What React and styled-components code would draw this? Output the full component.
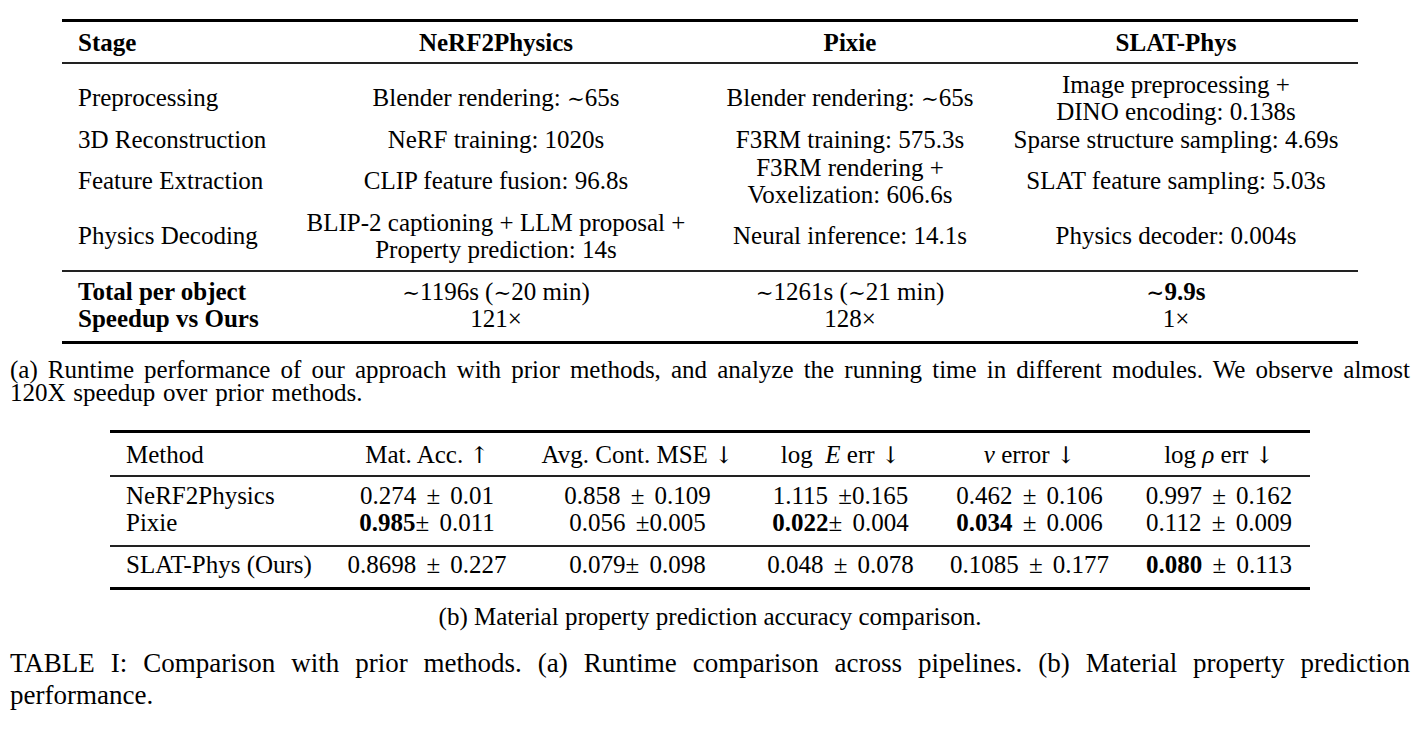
import React from "react";
import styled, { createGlobalStyle } from "styled-components";

const Global = createGlobalStyle`
  html, body { margin: 0; padding: 0; background: #fff; }
  body { font-family: "Liberation Serif", "DejaVu Serif", serif; color: #000; }
`;

const Page = styled.div`
  width: 1404px;
  padding: 19px 8px 0 8px;
  display: flex;
  flex-direction: column;
  font-size: 25px;
`;

const Table = styled.div`
  width: ${(p) => p.$w}px;
  margin: ${(p) => p.$mt || 0}px auto 0 auto;
  border-top: 3px solid #000;
  border-bottom: 3px solid #000;
`;

const Section = styled.div`
  padding: ${(p) => p.$pt}px 0 ${(p) => p.$pb}px 0;
  border-top: ${(p) => (p.$rule ? "2px solid #222" : "none")};
`;

const HeaderRow = styled.div`
  display: grid;
  grid-template-columns: ${(p) => p.$cols};
  height: ${(p) => p.$h}px;
  align-items: center;
  line-height: 27px;
  font-weight: ${(p) => (p.$bold ? 700 : 400)};
`;

const Row = styled.div`
  display: grid;
  grid-template-columns: ${(p) => p.$cols};
  line-height: 27px;
  height: ${(p) => p.$h}px;
`;

const Cell = styled.div`
  padding: 0 16px;
  display: flex;
  flex-direction: column;
  justify-content: center;
  align-items: ${(p) => (p.$left ? "flex-start" : "center")};
  text-align: ${(p) => (p.$left ? "left" : "center")};
  white-space: nowrap;
  font-weight: ${(p) => (p.$bold ? 700 : "inherit")};
  word-spacing: ${(p) => p.$ws || 0}px;
`;

const B = styled.b`
  font-weight: 700;
`;

const M = styled.i`
  font-style: italic;
`;

const Arrow = styled.span`
  font-family: "DejaVu Serif", serif;
  font-variant-emoji: text;
  font-size: 0.92em;
  line-height: 0;
`;

const Sim = styled.span`
  font-size: 0.85em;
  line-height: 0;
`;

const Caption = styled.p`
  margin: ${(p) => p.$mt}px 0 0 0;
  font-size: ${(p) => p.$fs || 25}px;
  line-height: ${(p) => p.$lh}px;
  word-spacing: ${(p) => p.$ws || 0}px;
  text-align: ${(p) => p.$align || "justify"};
  text-align-last: ${(p) => (p.$align === "center" ? "center" : "left")};
  padding: 0 2px;
`;

const colsA = "224px 420px 288px 364px";
const colsB = "219px 196px 225px 181px 197px 182px";

const S = () => <Sim>∼</Sim>;

const runtimeRows = [
  ["Preprocessing", [<>Blender rendering: <S />65s</>], [<>Blender rendering: <S />65s</>], ["Image preprocessing +", "DINO encoding: 0.138s"]],
  ["3D Reconstruction", ["NeRF training: 1020s"], ["F3RM training: 575.3s"], ["Sparse structure sampling: 4.69s"]],
  ["Feature Extraction", ["CLIP feature fusion: 96.8s"], ["F3RM rendering +", "Voxelization: 606.6s"], ["SLAT feature sampling: 5.03s"]],
  ["Physics Decoding", ["BLIP-2 captioning + LLM proposal +", "Property prediction: 14s"], ["Neural inference: 14.1s"], ["Physics decoder: 0.004s"]],
];

const Lines = ({ lines }) => lines.map((l, i) => <span key={i}>{l}</span>);

export default function App() {
  return (
    <>
      <Global />
      <Page>
        <Table $w={1296}>
          <HeaderRow $cols={colsA} $h={40} $bold>
            <Cell $left>Stage</Cell>
            <Cell>NeRF2Physics</Cell>
            <Cell>Pixie</Cell>
            <Cell>SLAT-Phys</Cell>
          </HeaderRow>
          <Section $rule $pt={6} $pb={7}>
            {runtimeRows.map((r) => {
              const n = Math.max(r[1].length, r[2].length, r[3].length);
              return (
                <Row $cols={colsA} $h={n * 27 + 1} key={r[0]}>
                  <Cell $left>{r[0]}</Cell>
                  <Cell><Lines lines={r[1]} /></Cell>
                  <Cell><Lines lines={r[2]} /></Cell>
                  <Cell><Lines lines={r[3]} /></Cell>
                </Row>
              );
            })}
          </Section>
          <Section $rule $pt={6} $pb={9}>
            <Row $cols={colsA} $h={27}>
              <Cell $left $bold>Total per object</Cell>
              <Cell><span><S />1196s (<S />20 min)</span></Cell>
              <Cell><span><S />1261s (<S />21 min)</span></Cell>
              <Cell><span><B><S />9.9s</B></span></Cell>
            </Row>
            <Row $cols={colsA} $h={27}>
              <Cell $left $bold>Speedup vs Ours</Cell>
              <Cell>121×</Cell>
              <Cell>128×</Cell>
              <Cell>1×</Cell>
            </Row>
          </Section>
        </Table>

        <Caption $mt={14} $lh={23} $ws={1.5}>
          (a) Runtime performance of our approach with prior methods, and analyze the running time in different modules. We observe almost 120X speedup over prior methods.
        </Caption>

        <Table $w={1200} $mt={26}>
          <HeaderRow $cols={colsB} $h={42}>
            <Cell $left>Method</Cell>
            <Cell><span>Mat. Acc. <Arrow>↑</Arrow></span></Cell>
            <Cell><span>Avg. Cont. MSE <Arrow>↓</Arrow></span></Cell>
            <Cell><span>log&nbsp; <M>E</M> err <Arrow>↓</Arrow></span></Cell>
            <Cell><span><M>ν</M> error <Arrow>↓</Arrow></span></Cell>
            <Cell><span>log <M>ρ</M> err <Arrow>↓</Arrow></span></Cell>
          </HeaderRow>
          <Section $rule $pt={4.5} $pb={9.5}>
            <Row $cols={colsB} $h={27}>
              <Cell $left>NeRF2Physics</Cell>
              <Cell $ws={4}>0.274 ± 0.01</Cell>
              <Cell $ws={4}>0.858 ± 0.109</Cell>
              <Cell $ws={4}>1.115 ±0.165</Cell>
              <Cell $ws={4}>0.462 ± 0.106</Cell>
              <Cell $ws={4}>0.997 ± 0.162</Cell>
            </Row>
            <Row $cols={colsB} $h={27}>
              <Cell $left>Pixie</Cell>
              <Cell $ws={4}><span><B>0.985</B>± 0.011</span></Cell>
              <Cell $ws={4}>0.056 ±0.005</Cell>
              <Cell $ws={4}><span><B>0.022</B>± 0.004</span></Cell>
              <Cell $ws={4}><span><B>0.034</B> ± 0.006</span></Cell>
              <Cell $ws={4}>0.112 ± 0.009</Cell>
            </Row>
          </Section>
          <Section $rule $pt={4} $pb={8.5}>
            <Row $cols={colsB} $h={27}>
              <Cell $left>SLAT-Phys (Ours)</Cell>
              <Cell $ws={4}>0.8698 ± 0.227</Cell>
              <Cell $ws={4}>0.079± 0.098</Cell>
              <Cell $ws={4}>0.048 ± 0.078</Cell>
              <Cell $ws={4}>0.1085 ± 0.177</Cell>
              <Cell $ws={4}><span><B>0.080</B> ± 0.113</span></Cell>
            </Row>
          </Section>
        </Table>

        <Caption $mt={13} $lh={27} $align="center">
          (b) Material property prediction accuracy comparison.
        </Caption>

        <Caption $mt={17} $lh={32} $fs={27}>
          TABLE I: Comparison with prior methods. (a) Runtime comparison across pipelines. (b) Material property prediction performance.
        </Caption>
      </Page>
    </>
  );
}
